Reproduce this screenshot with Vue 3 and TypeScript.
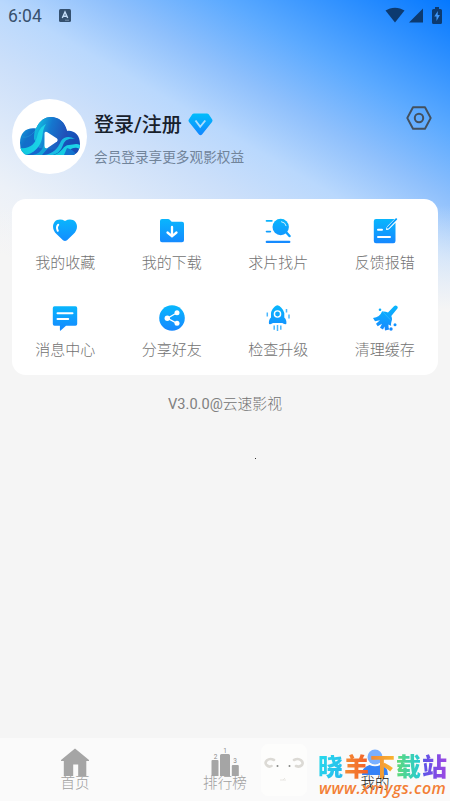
<script setup lang="ts">
interface Entry { label: string; icon: string }

const entries: Entry[] = [
  { label: '我的收藏', icon: 'heart' },
  { label: '我的下载', icon: 'folder' },
  { label: '求片找片', icon: 'search' },
  { label: '反馈报错', icon: 'feedback' },
  { label: '消息中心', icon: 'message' },
  { label: '分享好友', icon: 'share' },
  { label: '检查升级', icon: 'rocket' },
  { label: '清理缓存', icon: 'broom' },
]
</script>

<template>
  <div class="screen">
    <header class="status">
      <span class="time">6:04</span>
      <svg class="badge" viewBox="0 0 12 13"><rect width="12" height="13" rx="1.5" fill="#34506f" /><path d="M3.3 9 6 3l2.700 6M4.300 7.200h3.400" fill="none" stroke="#c5ddf7" stroke-width="1.400" /><path d="M6 11.200h4" stroke="#8fa9c4" stroke-width=".7" /></svg>
      <div class="signals">
        <svg width="20" height="16" viewBox="0 0 20 16"><path d="M.5 3.600C6-.3 14-.3 19.500 3.600L10 15.500Z" fill="#0c3a70" /></svg>
        <svg width="14" height="15" viewBox="0 0 14 15"><path d="M14 .5V14.500H0Z" fill="#0c3a70" /></svg>
        <svg class="battery" width="10" height="17" viewBox="0 0 10 17"><path d="M3 0h4v2h1.500Q10 2 10 3.500v12Q10 17 8.500 17h-7Q0 17 0 15.500v-12Q0 2 1.500 2H3Z" fill="#0c3a70" /><path d="M5.800 4 2.300 9.500h2.200V14l3.400-6H5.700Z" fill="#3e97fa" /></svg>
      </div>
    </header>

    <section class="profile">
      <div class="avatar">
        <svg width="60" height="38" viewBox="0 0 60 38">
          <defs>
            <linearGradient id="cloud" x1="0" y1="0" x2="1" y2=".4"><stop offset="0" stop-color="#12b6e4" /><stop offset=".3" stop-color="#126fc9" /><stop offset=".55" stop-color="#1767ce" /><stop offset="1" stop-color="#174cb4" /></linearGradient>
            <linearGradient id="dome" x1="0" y1=".3" x2="1" y2=".6"><stop offset="0" stop-color="#11c9e3" /><stop offset=".45" stop-color="#1577cf" /><stop offset="1" stop-color="#2349b4" /></linearGradient>
            <linearGradient id="wave" x1="0" y1="0" x2="1" y2="0"><stop offset="0" stop-color="#0fc7dd" /><stop offset="1" stop-color="#20d6ea" /></linearGradient>
            <clipPath id="outline"><path d="M7 38Q0 36 0 26C0 15 7 10 16 11.500 20 3 25 0 31 0 39 0 45 5 47 14c7-1 13 4 13 13 0 6-3 10-7 11Z" /></clipPath>
          </defs>
          <g clip-path="url(#outline)">
            <path d="M0 0h60v38H0Z" fill="url(#cloud)" />
            <path d="M14 22C14 6 22 0 31 0s17 7 17 22l-9 11-20-2Z" fill="url(#dome)" />
            <path d="M0 31c10 1 15-4 17-11 2-8 4-10 9-13-5 8-2 13-6 20-4 7-8 9-14 11H0Z" fill="url(#wave)" />
            <path d="M13 38c10-2 11-10 12-17l3 10-6 7Z" fill="#12a4d7" />
            <path d="M24 38c8-1 14-6 17-14 3-5 9-5 14-2-7-1-10 1-12 6-2 6-6 9-10 10Z" fill="#19bce2" />
            <path d="M34 38c9-3 9-10 15-10 4 0 7-2 11 0v4c-7-3-10 0-13 6Z" fill="url(#wave)" />
            <path d="M47 31c6 2 8 4 9 7H44Z" fill="#1473ce" />
            <path d="M0 19c8 4 13-3 16-6" fill="none" stroke="#28a9db" stroke-width="1" opacity=".4" />
          </g>
          <path d="M24.500 16.500Q24.500 14 27 15L37 21.500q1.500 1.500 0 3L27.500 31q-3 1-3-2Z" fill="#fff" />
        </svg>
      </div>
      <div class="account">
        <h1 class="login">登录/注册
          <svg class="diamond" width="25" height="23" viewBox="0 0 25 23"><defs><linearGradient id="gem" x1="0" y1="0" x2="0" y2="1"><stop stop-color="#00bdfb" /><stop offset="1" stop-color="#1386ff" /></linearGradient></defs><path d="M6 .5h13q1 0 1.700.8l3.500 5.200q.8 1.300-.2 2.400L14 21.500q-1.500 1.500-3 0L1 8.900Q0 7.800.8 6.500l3.500-5.200Q5 .5 6 .5Z" fill="url(#gem)" /><path d="m7.500 7.500 4.700 6.300 5.100-6.300" fill="none" stroke="#a9deff" stroke-width="1.900" /></svg>
        </h1>
        <p class="benefit">会员登录享更多观影权益</p>
      </div>
      <svg class="settings" width="26" height="24" viewBox="0 0 26 24"><path d="M7 1.200h12L24.700 12 19 22.800H7L1.300 12Z" fill="none" stroke="#43505e" stroke-width="1.900" stroke-linejoin="round" /><circle cx="13" cy="12" r="4.200" fill="none" stroke="#43505e" stroke-width="2" /></svg>
    </section>

    <main class="panel">
      <div v-for="entry in entries" :key="entry.label" class="entry">
        <svg class="icon" viewBox="0 0 26 26">
          <defs><linearGradient :id="'fill-' + entry.icon" gradientUnits="userSpaceOnUse" x1="13" y1="0" x2="13" y2="26"><stop stop-color="#08b8fd" /><stop offset="1" stop-color="#1687ff" /></linearGradient></defs>
          <g :fill="`url(#fill-${entry.icon})`">
            <template v-if="entry.icon === 'heart'">
              <path d="M13 3C17 .8 21 1.300 23.500 4c2.700 4 1.500 8.500-2 12L15 22.200q-2 1.600-4 0L4.500 16C1 12.500-.2 8 2.500 4 5 1.300 9 .8 13 3Z" /><path d="M6.200 6.800q-2.200 2.200-.4 6" fill="none" stroke="#fff" stroke-width="2" stroke-linecap="round" />
            </template>
            <template v-else-if="entry.icon === 'folder'">
              <path d="M3 1h6q1.200 0 2 .9l1.700 1.800H23q2 0 2 2v16.500q0 2-2 2H3q-2 0-2-2V3q0-2 2-2Z" /><path d="M13 9v9M8.500 14.500 13 18.300l4.500-3.800" fill="none" stroke="#fff" stroke-width="2.300" stroke-linecap="round" />
            </template>
            <template v-else-if="entry.icon === 'search'">
              <circle cx="15.700" cy="9" r="8.200" /><path d="m20.500 13.500 4 4.500" stroke="#0d9fff" stroke-width="2.500" stroke-linecap="round" /><rect x=".7" y="2" width="7" height="1.700" rx=".8" /><rect x=".7" y="12.700" width="5.500" height="1.700" rx=".8" /><rect x=".7" y="22.700" width="24.700" height="2.200" rx="1" /><path d="M16.500 3.700q4 .6 4.600 4" fill="none" stroke="#d5f1ff" stroke-width="1" stroke-linecap="round" />
            </template>
            <template v-else-if="entry.icon === 'feedback'">
              <path d="M4 1h18.500l-7 7q-1.700 2-1.400 4 2 .2 3.800-1.500l5.600-5.700V23q0 2.200-2.200 2.200H4q-2.200 0-2.200-2.200V3.200Q1.800 1 4 1Z" /><path d="m24.200 1.200-8.200 8.500" stroke="#079ffd" stroke-width="1.900" stroke-linecap="round" /><path d="M6 11.800h4M6 19h12" stroke="#fff" stroke-width="2" stroke-linecap="round" />
            </template>
            <template v-else-if="entry.icon === 'message'">
              <path d="M2.500 1.300h21q1.700 0 1.700 1.700v16q0 1.700-1.700 1.700H14l-5.300 4.800q-.8.700-.8-.7v-4.100H2.500Q.8 20.700.8 19V3q0-1.700 1.700-1.700Z" /><path d="M5.500 8.200h15M5.500 14h10.700" stroke="#fff" stroke-width="2" stroke-linecap="round" />
            </template>
            <template v-else-if="entry.icon === 'share'">
              <circle cx="13" cy="13" r="12.800" /><path d="m18 7.800-9.500 5.500 9.500 5" fill="none" stroke="#fff" stroke-width="1.300" /><g fill="#fff"><circle cx="18" cy="7.800" r="2.500" /><circle cx="8.300" cy="13.200" r="2.700" /><circle cx="18" cy="18.300" r="2.500" /></g>
            </template>
            <template v-else-if="entry.icon === 'rocket'">
              <path d="M12.500.3C15 1 18 3.500 19.300 8v4.500q2.700 2.500 2 6.500-2.300.5-4-1H8q-1.700 1.500-4 1-.7-4 2-6.500V8C7 3.500 10 1 12.500.3Z" /><circle cx="12.500" cy="9" r="3.100" fill="none" stroke="#fff" stroke-width="1.400" /><path d="M2.300 7.500v4M21.500 4v3.500M24 9.500v4M9.200 20.500v4.300M12.500 20v6M15.800 20.500v4.300" stroke="#49b7ff" stroke-width="1.500" />
            </template>
            <template v-else>
              <path d="m16 7.500 6-6.300q1.500-1.500 3-.2t0 3L19.300 11q1.300 3 .2 5.500-.8 2.500-.3 4.500l-2.700-1.500q-.2 3 .8 5l-4.300 1-.5-4-1.500 3-3-1.700 2-4-4.300 2.500-1.700-2.600 4-3.500-5 1-2-3.200Q8 12 10 6.500q3-.5 6 1Z" /><path d="m10.500 6.500 8 8.400" stroke="#35c0ff" stroke-width=".7" /><circle cx="8" cy="4.800" r="1.300" /><circle cx="23" cy="19.800" r="1.500" /><circle cx="19" cy="24" r="1.700" />
            </template>
          </g>
        </svg>
        <span>{{ entry.label }}</span>
      </div>
    </main>

    <p class="version"><span class="release">V3.0.0@</span>云速影视</p>
    <i class="speck"></i>

    <nav class="tabs">
      <div class="tab">
        <svg width="28" height="28" viewBox="0 0 28 28"><path d="M14 .5 28 12v1h-2.700v15h-8.100V16.500h-5V28H2.800V13H0v-1Z" fill="#a5a5a5" /></svg>
        <span>首页</span>
      </div>
      <div class="tab">
        <svg width="28" height="28" viewBox="0 0 28 28"><g fill="#a5a5a5"><path d="M.5 13q0-1 1-1h5q1 0 1 1v15h-7ZM9 7.500Q9 6 10.500 6h7Q19 6 19 7.500V28H9ZM20.800 18q0-1 1-1h5q1 0 1 1V28h-7Z" /><g fill="#8b8b8b"><text x="4.600" y="10.800">2</text><text x="14.200" y="4.800">1</text><text x="24" y="15.300">3</text></g></g></svg>
        <span>排行榜</span>
      </div>
      <div class="tab active">
        <svg width="28" height="28" viewBox="0 0 28 28"><circle cx="14" cy="9" r="7.500" fill="#79afff" /><path d="M1 27q0-8 7.500-10 5.500 2.500 11 0Q27 19 27 27Z" fill="#3482f7" /></svg>
        <span>我的</span>
      </div>
    </nav>

    <div class="sheep">
      <svg width="46" height="52" viewBox="0 0 46 52"><g fill="none" stroke="#dcdad5" stroke-width="2.600" stroke-linecap="round"><path d="M13 16C7 13 3 18 5.500 21q2.500 2.500 5 1" /><path d="M33 16c6-3 10 2 8 5q-2.500 2.500-6 1" /></g><g fill="#858784"><circle cx="16.500" cy="22" r="1" /><circle cx="28.500" cy="22" r="1" /></g><path d="M19 36h6M22 36l2-2" stroke="#e8e6e2" fill="none" /></svg>
    </div>
    <div class="mark">
      <div class="site"><b class="c1">晓</b><b class="c2">羊</b><b class="c3">下</b><b class="c4">载</b><b class="c5">站</b></div>
      <div class="url">www.xmygs.com</div>
    </div>
  </div>
</template>

<style>
body { margin: 0; }
</style>

<style scoped>
.screen {
  position: relative;
  box-sizing: border-box;
  width: 450px;
  height: 801px;
  overflow: hidden;
  display: flex;
  flex-direction: column;
  font-family: Roboto, "Noto Sans CJK SC", sans-serif;
  background:
    linear-gradient(180deg, rgba(245, 245, 245, 0) 205px, #f5f5f5 310px),
    linear-gradient(210deg, #0478ff 0, #5caaff 23%, #8fc0fc 35%, #b9d8fd 46%, #cbdffa 56%, #ecf1f8 78%, #f5f5f5 90%) 0 0 / 450px 310px no-repeat,
    #f5f5f5;
}
.status { display: flex; height: 32px; align-items: center; padding: 0 8px; box-sizing: border-box; }
.time { width: 51px; font-size: 17.500px; line-height: 32px; color: #38516d; }
.badge { width: 12px; height: 13px; margin-top: -2px; }
.signals { display: flex; align-items: center; margin-left: auto; margin-top: -2px; gap: 4px; }
.battery { margin-left: 5px; }
.profile { display: flex; height: 167px; padding: 67px 18px 0 12px; box-sizing: border-box; align-items: flex-start; }
.avatar { width: 75px; height: 75px; border-radius: 50%; background: #fff; display: flex; align-items: center; justify-content: center; padding-bottom: 2px; box-sizing: border-box; }
.account { padding: 11px 0 0 7px; }
.login { display: flex; align-items: center; gap: 6px; height: 30px; margin: 0; font-size: 20px; line-height: 32px; font-weight: 500; color: #17202b; }
.diamond { margin-top: -2px; }
.benefit { margin: 7px 0 0; font-size: 13.650px; line-height: 20px; color: #71849a; }
.settings { margin: 7px 0 0 auto; }
.panel { width: 426px; height: 176px; margin-left: 12px; border-radius: 14px; background: #fff; display: grid; grid-template-columns: repeat(4, 1fr); grid-template-rows: 87.500px 87.500px; }
.entry { display: flex; flex-direction: column; align-items: center; padding-top: 18.500px; gap: 7px; font-size: 15px; line-height: 24px; color: #727272; font-weight: 300; }
.icon { width: 26px; height: 26px; flex: none; }
.version { margin: 17px 0 0; text-align: center; font-size: 14.800px; line-height: 24px; color: #727272; font-weight: 300; }
.release { font-weight: 400; font-size: 14.600px; color: #808080; }
.speck { width: 1px; height: 1px; margin: 42px 0 0 255px; background: #333; }
.tabs { display: grid; grid-template-columns: repeat(3, 1fr); height: 63px; margin-top: auto; background: #fafafa; }
.tab { display: flex; flex-direction: column; align-items: center; padding-top: 10px; color: #a0a0a0; font-size: 14.600px; line-height: 20px; font-weight: 300; }
.tab svg { flex: none; }
.tab span { position: relative; z-index: 2; margin-top: -3px; }
.tab text { font-size: 6.500px; font-weight: 400; text-anchor: middle; }
.active { color: #151515; }
.sheep { position: absolute; left: 261px; top: 744px; width: 46px; height: 52px; border-radius: 7px; background: #fdfdfc; }
.mark { position: absolute; left: 318px; top: 748px; width: 132px; height: 53px; }
.site { display: flex; height: 34px; font-family: "Noto Sans CJK SC", sans-serif; font-size: 25px; line-height: 34px; font-weight: 700; }
.site b { width: 26px; color: transparent; background-clip: text; -webkit-background-clip: text; }
.c1 { background-image: linear-gradient(120deg, #29dfeb, #27b5ed); }
.c2 { background-image: linear-gradient(90deg, #f48d35, #f25b26); }
.c3 { background-image: linear-gradient(90deg, #ef8738, #fbb72d); }
.c4 { background-image: linear-gradient(90deg, #62da75, #20c9dc); }
.c5 { background-image: linear-gradient(90deg, #5854e8, #a046e1); }
.url { position: relative; z-index: 3; margin: -4px 0 0 1px; font-family: "Open Sans", sans-serif; font-size: 16px; line-height: 20px; font-weight: 600; font-style: italic; letter-spacing: .45px; color: #f37f35; white-space: nowrap; }
</style>
